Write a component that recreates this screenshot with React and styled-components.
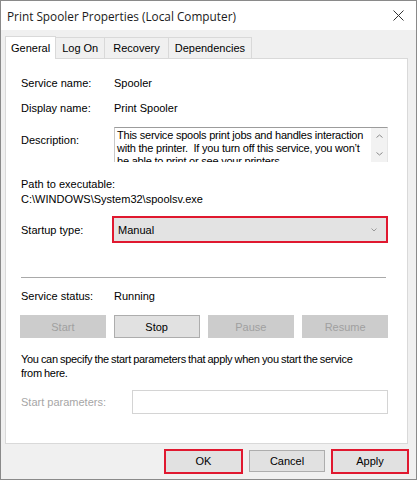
import React from "react";
import styled, { createGlobalStyle } from "styled-components";

const Global = createGlobalStyle`
  html, body { margin: 0; padding: 0; background: #ffffff; }
  body { font-family: "Liberation Sans", Arial, sans-serif; }
  * { box-sizing: border-box; }
`;

const Window = styled.div`
  width: 417px;
  height: 480px;
  border: 1px solid #8a8a8a;
  background: #f0f0f0;
  display: flex;
  flex-direction: column;
  overflow: hidden;
`;

const TitleBar = styled.div`
  height: 29px;
  background: #ffffff;
  display: flex;
  align-items: center;
  justify-content: space-between;
  padding: 0 12px 0 6px;
`;

const Title = styled.div`
  font-family: "Open Sans", "Noto Sans", sans-serif;
  font-size: 11.8px;
  color: #1b1b1b;
`;

const Body = styled.div`
  flex: 1;
  display: flex;
  flex-direction: column;
  padding: 5px 8px 0 4px;
`;

const Tabs = styled.div`
  display: flex;
  align-items: flex-end;
  height: 23px;
`;

const Tab = styled.div`
  height: ${(p) => (p.$active ? "23px" : "21px")};
  padding: 0 ${(p) => p.$px}px;
  display: flex;
  align-items: center;
  font-size: 11px;
  color: #000;
  background: ${(p) => (p.$active ? "#ffffff" : "#f0f0f0")};
  border: 1px solid #d9d9d9;
  border-bottom: none;
  margin-left: ${(p) => (p.$active ? "0" : "-1px")};
  position: relative;
  z-index: ${(p) => (p.$active ? 1 : 0)};
  margin-bottom: ${(p) => (p.$active ? "-1px" : "0")};
`;

const Panel = styled.div`
  height: 386px;
  background: #ffffff;
  border: 1px solid #d9d9d9;
  padding: 15px 19px 0 15px;
  display: flex;
  flex-direction: column;
  font-size: 11px;
  color: #000;
`;

const Row = styled.div`
  display: flex;
  align-items: ${(p) => (p.$top ? "flex-start" : "center")};
  height: ${(p) => p.$h}px;
  margin-top: ${(p) => p.$mt || 0}px;
`;

const Label = styled.div`
  width: ${(p) => p.$w || 93}px;
  flex: none;
  color: ${(p) => (p.$disabled ? "#a6a6a6" : "#000")};
  padding-top: ${(p) => p.$pt || 0}px;
`;

const Value = styled.div`
  white-space: nowrap;
`;

const TextLine = styled.div`
  height: ${(p) => p.$h || 15}px;
  line-height: ${(p) => p.$h || 15}px;
  margin-top: ${(p) => p.$mt || 0}px;
  white-space: nowrap;
`;

const Paragraph = styled(TextLine)`
  letter-spacing: -0.3px;
  word-spacing: -0.5px;
`;

const DescBox = styled.div`
  width: 275px;
  height: 35px;
  border-top: 1px solid #9c9c9c;
  border-left: 1px solid #c8c8c8;
  border-right: 1px solid #e6e6e6;
  display: flex;
  overflow: hidden;
`;

const DescText = styled.div`
  flex: 1;
  padding: 1px 0 0 2px;
  line-height: 13px;
  font-size: 11px;
  letter-spacing: -0.22px;
  overflow: hidden;
`;

const ScrollBar = styled.div`
  width: 16px;
  background: #f2f2f2;
  display: flex;
  flex-direction: column;
  align-items: center;
  justify-content: space-between;
  padding: 6px 0 6px;
`;

const Select = styled.div`
  width: 281px;
  height: 27px;
  margin-left: -2px;
  border: 2px solid #e0182f;
  background: #e3e3e3;
  display: flex;
  align-items: center;
  justify-content: space-between;
  padding: 0 9px 0 4px;
  font-size: 11px;
`;

const Separator = styled.div`
  height: 1px;
  width: 365px;
  background: #a9a9a9;
  margin-top: ${(p) => p.$mt}px;
`;

const ButtonRow = styled.div`
  display: flex;
  gap: 8px;
  height: 23px;
  margin-top: ${(p) => p.$mt}px;
  margin-left: -1px;
`;

const Btn = styled.div`
  width: ${(p) => p.$w}px;
  height: 23px;
  display: flex;
  align-items: center;
  justify-content: center;
  font-size: 11px;
  background: ${(p) => (p.$disabled ? "#cccccc" : "#e1e1e1")};
  color: ${(p) => (p.$disabled ? "#a0a0a0" : "#000")};
  border: 1px solid ${(p) => (p.$disabled ? "#cccccc" : "#adadad")};
`;

const Input = styled.div`
  width: 258px;
  height: 24px;
  border: 1px solid #d4d4d4;
  background: #fff;
`;

const Footer = styled.div`
  display: flex;
  justify-content: flex-end;
  align-items: center;
  gap: 6px;
  height: 34px;
  margin-right: -1px;
`;

const FooterBtn = styled.div`
  width: ${(p) => p.$w}px;
  height: ${(p) => (p.$hl ? 25 : 22)}px;
  display: flex;
  align-items: center;
  justify-content: center;
  font-size: 11px;
  background: #e1e1e1;
  border: ${(p) => (p.$hl ? "2px solid #e0182f" : "1px solid #adadad")};
  color: #000;
`;

const Chev = ({ up, w = 8, h = 5, color = "#7a7a7a" }) => (
  <svg width={w} height={h} viewBox={`0 0 ${w} ${h}`}>
    <path
      d={
        up
          ? `M0.5 ${h - 0.5} L${w / 2} 1 L${w - 0.5} ${h - 0.5}`
          : `M0.5 0.5 L${w / 2} ${h - 1} L${w - 0.5} 0.5`
      }
      fill="none"
      stroke={color}
      strokeWidth="1"
    />
  </svg>
);

export default function App() {
  return (
    <>
      <Global />
      <Window>
        <TitleBar>
          <Title>Print Spooler Properties (Local Computer)</Title>
          <svg width="11" height="11" viewBox="0 0 11 11">
            <path d="M0.5 0.5 L10.5 10.5 M10.5 0.5 L0.5 10.5" stroke="#333" strokeWidth="1" />
          </svg>
        </TitleBar>
        <Body>
          <Tabs>
            <Tab $active $px={5}>General</Tab>
            <Tab $px={6}>Log On</Tab>
            <Tab $px={8}>Recovery</Tab>
            <Tab $px={6}>Dependencies</Tab>
          </Tabs>
          <Panel>
            <Row $h={16} $mt={1}>
              <Label>Service name:</Label>
              <Value>Spooler</Value>
            </Row>
            <Row $h={16} $mt={9}>
              <Label>Display name:</Label>
              <Value>Print Spooler</Value>
            </Row>
            <Row $h={35} $mt={11} $top>
              <Label $pt={7}>Description:</Label>
              <DescBox>
                <DescText>
                  This service spools print jobs and handles interaction with the printer.&nbsp; If you turn off this service, you won’t be able to print or see your printers.
                </DescText>
                <ScrollBar>
                  <Chev up w={7} h={4} color="#8a8a8a" />
                  <Chev w={7} h={4} color="#8a8a8a" />
                </ScrollBar>
              </DescBox>
            </Row>
            <TextLine $mt={15}>Path to executable:</TextLine>
            <TextLine>C:\WINDOWS\System32\spoolsv.exe</TextLine>
            <Row $h={27} $mt={9}>
              <Label>Startup type:</Label>
              <Select>
                <span>Manual</span>
                <Chev w={6} h={4} color="#9a9a9a" />
              </Select>
            </Row>
            <Separator $mt={34} />
            <Row $h={16} $mt={10}>
              <Label>Service status:</Label>
              <Value>Running</Value>
            </Row>
            <ButtonRow $mt={11}>
              <Btn $w={86} $disabled>Start</Btn>
              <Btn $w={86}>Stop</Btn>
              <Btn $w={87} $disabled>Pause</Btn>
              <Btn $w={86} $disabled>Resume</Btn>
            </ButtonRow>
            <Paragraph $h={14} $mt={14}>
              You can specify the start parameters that apply when you start the service
            </Paragraph>
            <Paragraph $h={14}>from here.</Paragraph>
            <Row $h={24} $mt={10}>
              <Label $w={111} $disabled>Start parameters:</Label>
              <Input />
            </Row>
          </Panel>
          <Footer>
            <FooterBtn $w={79} $hl>OK</FooterBtn>
            <FooterBtn $w={76}>Cancel</FooterBtn>
            <FooterBtn $w={78} $hl>Apply</FooterBtn>
          </Footer>
        </Body>
      </Window>
    </>
  );
}
